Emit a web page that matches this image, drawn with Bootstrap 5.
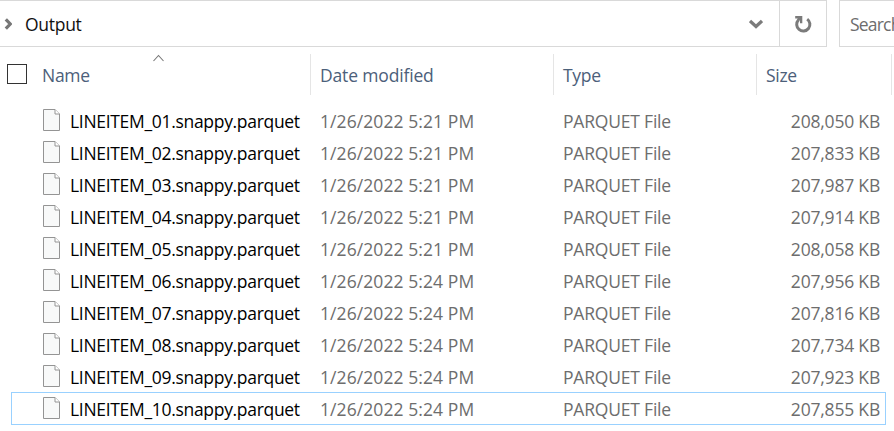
<!DOCTYPE html>
<html lang="en">
<head>
<meta charset="utf-8">
<meta name="viewport" content="width=device-width, initial-scale=1">
<title>Output</title>
<link href="https://cdn.jsdelivr.net/npm/bootstrap@5.3.0/dist/css/bootstrap.min.css" rel="stylesheet">
<style>
body{font-family:"Open Sans","Noto Sans",sans-serif;font-size:17.5px;line-height:24px;color:#6d6d6d;background:#fff;height:431px;white-space:nowrap}
.topbar{height:47px}
.address{width:827px;border:1px solid #d9d9d9;border-left:0;color:#111}
.reload{width:47px;border-left:1px solid #d9d9d9}
.search{width:55px;margin-left:12px;padding-left:10px;border:1px solid #d9d9d9;border-right:0}
.search span{letter-spacing:-.8px}
.crumb{letter-spacing:-.28px;margin-left:13px}
.heads{height:57px;padding-top:7px;color:#4c607a}
.heads>div{height:41px;border-right:1px solid #e5e5e5;padding-top:10px}
.heads .h-text{padding-left:9px}
.heads span{letter-spacing:-.3px}
.heads .title{margin-top:-1px}
.heads .h-text{padding-top:9px}
.heads .h-date{letter-spacing:-.16px}
.c-name{width:311px}.c-date{width:243px}.c-type{width:203px}.c-size{width:135px}
.check{width:20px;height:20px;border:1px solid #333;margin:0 15px 0 7px}
.sorter{left:153px;top:7px}
.entry{height:32px;width:875px;margin-left:11px}
.entry>div{padding-top:5px}
.entry .c-name{width:301px;padding-left:32px;padding-top:0;color:#000}
.entry .c-size{width:122px}
.entry.focused{height:33px;outline:1px solid #99d1ff;outline-offset:-1px}
.icon{margin:5px 10px 0 0}
.label{letter-spacing:-.31px;padding-top:5px}
.date{letter-spacing:.08px}
.kind,.bytes{letter-spacing:-.2px}
</style>
</head>
<body class="overflow-hidden">
<header class="topbar d-flex">
  <div class="address d-flex align-items-stretch">
    <div class="d-flex align-items-center flex-grow-1">
      <svg class="ms-1" width="8" height="12" viewBox="0 0 8 12"><path d="M1.8 1.3 6.3 6 1.8 10.7" fill="none" stroke="#777" stroke-width="3.2"/></svg>
      <span class="crumb">Output</span>
      <svg class="ms-auto" width="14" height="10" viewBox="0 0 14 10"><path d="M1 2 7 7.5 13 2" fill="none" stroke="#7b7b7b" stroke-width="3.3"/></svg>
      <span class="pe-3"></span>
    </div>
    <div class="reload d-flex align-items-center justify-content-center">
      <svg width="18" height="18" viewBox="0 0 18 18"><path d="M13.2 4.1A6.6 6.6 0 1 1 4.4 5" fill="none" stroke="#7b7b7b" stroke-width="3"/><path d="M1.2 1H8.3V8.2H6V5.3L4.8 6.3 3 4.3 3.8 3.4H1.2z" fill="#7b7b7b"/></svg>
    </div>
  </div>
  <div class="search d-flex align-items-center overflow-hidden"><span>Search</span></div>
</header>
<main>
  <div class="heads d-flex position-relative">
    <svg class="sorter position-absolute" width="12" height="8" viewBox="0 0 12 8"><path d="M.5 7 5.5 1.5 10.5 7" fill="none" stroke="#777" stroke-width="1.1"/></svg>
    <div class="c-name d-flex"><span class="check"></span><span class="title">Name</span></div>
    <div class="c-date h-text"><span class="h-date">Date modified</span></div>
    <div class="c-type h-text"><span>Type</span></div>
    <div class="c-size h-text"><span>Size</span></div>
  </div>
  <div id="files"></div>
</main>
<script>
const files=[["01","5:21","208,050"],["02","5:21","207,833"],["03","5:21","207,987"],["04","5:21","207,914"],["05","5:21","208,058"],["06","5:24","207,956"],["07","5:24","207,816"],["08","5:24","207,734"],["09","5:24","207,923"],["10","5:24","207,855"]];
document.getElementById("files").innerHTML=files.map(([n,t,s],i)=>`
<div class="entry d-flex ${i===9?"focused":""}">
<div class="c-name d-flex align-items-start"><svg class="icon" width="17" height="22" viewBox="0 0 17 22"><path d="M.5.5h11.5l4.5 4.5v16.5H.5z" fill="#f8f9f9" stroke="#949494"/><path d="M12 .5V5h4.5" fill="#fff" stroke="#949494"/></svg><span class="label">LINEITEM_${n}.snappy.parquet</span></div>
<div class="c-date ps-2"><span class="date">1/26/2022 ${t} PM</span></div>
<div class="c-type ps-2"><span class="kind">PARQUET File</span></div>
<div class="c-size text-end"><span class="bytes">${s} KB</span></div>
</div>`).join("");
</script>
<script src="https://cdn.jsdelivr.net/npm/bootstrap@5.3.0/dist/js/bootstrap.bundle.min.js"></script>
</body>
</html>
